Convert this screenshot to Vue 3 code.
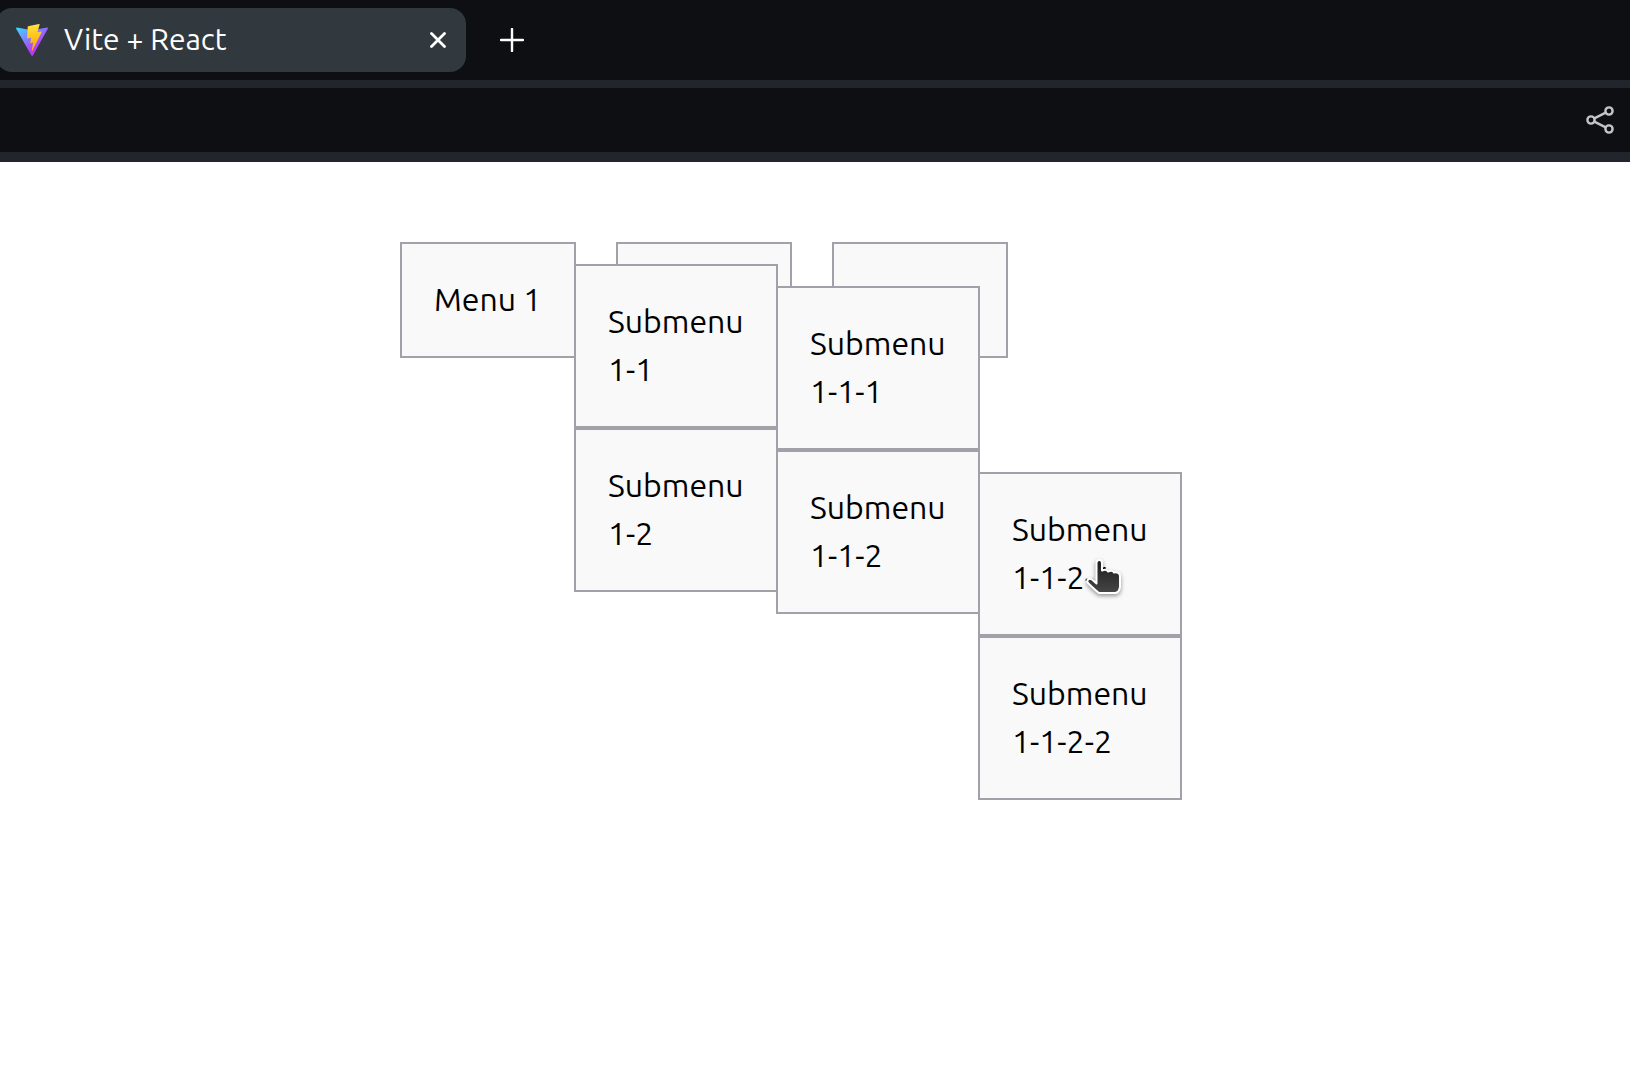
<script setup>
import { defineComponent, h } from 'vue'

const menus = [
  {
    label: 'Menu 1',
    open: true,
    children: [
      {
        label: 'Submenu 1-1',
        open: true,
        children: [
          { label: 'Submenu 1-1-1' },
          {
            label: 'Submenu 1-1-2',
            open: true,
            children: [
              { label: 'Submenu 1-1-2-1', hovered: true },
              { label: 'Submenu 1-1-2-2' },
            ],
          },
        ],
      },
      { label: 'Submenu 1-2' },
    ],
  },
  { label: 'Menu 2', covered: true },
  { label: 'Menu 3', covered: true },
]

// Hand pointer shown over the hovered entry
const pointer = () =>
  h('svg', { class: 'pointer', viewBox: '0 0 40 42', 'aria-hidden': 'true' }, [
    h('path', {
      d: 'M10.5 5C10.5 1 16 1 16 5V12.5C18 11.5 21 11.5 22 13.5C24 12.5 27 12.5 28 14.5C31 14 34 15 34 18V29C33.500 32 32 35 29 35H13C10 33 5 28 2 25C0 22 3 19.500 6 21.500L10.500 25.500Z',
      fill: 'url(#hand)',
      stroke: '#fff',
      'stroke-width': 2,
      'stroke-linejoin': 'round',
    }),
  ])

const MenuList = defineComponent({
  name: 'MenuList',
  props: { items: Array, root: Boolean },
  setup(props) {
    return () =>
      h(
        'ul',
        { class: props.root ? 'menu' : 'submenu' },
        props.items.map((item) =>
          h('li', { class: 'item', key: item.label }, [
            // Entries lying under an open submenu keep only their accessible name
            h(
              'button',
              { type: 'button', class: 'entry', 'aria-label': item.covered ? item.label : null },
              item.covered ? '' : item.label,
            ),
            item.open ? h(MenuList, { items: item.children }) : null,
            item.hovered ? pointer() : null,
          ]),
        ),
      )
  },
})
</script>

<template>
  <div class="window">
    <header>
      <div class="tabs">
        <div class="tab">
          <svg class="logo" viewBox="0 0 256 257" aria-hidden="true">
            <defs>
              <linearGradient id="shield" x1="-.828%" x2="57.636%" y1="7.652%" y2="78.411%">
                <stop offset="0%" stop-color="#41d1ff" />
                <stop offset="100%" stop-color="#bd34fe" />
              </linearGradient>
              <linearGradient id="bolt" x1="43.376%" x2="50.316%" y1="2.242%" y2="89.03%">
                <stop offset="0%" stop-color="#ffea83" />
                <stop offset="8.333%" stop-color="#ffdd35" />
                <stop offset="100%" stop-color="#ffa800" />
              </linearGradient>
              <linearGradient id="hand" x1="0" x2="0" y1="0" y2="1">
                <stop offset="0%" stop-color="#1c1c1c" />
                <stop offset="100%" stop-color="#464646" />
              </linearGradient>
            </defs>
            <path fill="url(#shield)" d="M255.153 37.938L134.897 252.976c-2.483 4.44-8.862 4.466-11.382.048L.875 37.958c-2.746-4.814 1.371-10.646 6.827-9.67l120.385 21.517a6.537 6.537 0 0 0 2.322-.004l117.867-21.483c5.438-.991 9.574 4.796 6.877 9.62Z" />
            <path fill="url(#bolt)" d="M185.432.063L96.44 17.501a3.268 3.268 0 0 0-2.634 3.014l-5.474 92.456a3.268 3.268 0 0 0 3.997 3.378l24.777-5.718c2.318-.535 4.413 1.507 3.936 3.838l-7.361 36.047c-.495 2.426 1.782 4.5 4.151 3.78l15.304-4.649c2.372-.72 4.652 1.36 4.15 3.788l-11.698 56.621c-.732 3.542 3.979 5.473 5.943 2.437l1.313-2.028l72.516-144.72c1.215-2.423-.88-5.186-3.54-4.672l-25.505 4.922c-2.396.462-4.435-1.77-3.759-4.114l16.646-57.705c.677-2.35-1.37-4.583-3.769-4.113Z" />
          </svg>
          <span class="title">Vite + React</span>
          <button class="icon" type="button" aria-label="Close tab">
            <svg width="16" height="16" viewBox="0 0 16 16"><path d="M1.5 1.5l13 13M14.5 1.5l-13 13" stroke="#fff" stroke-width="2.8" stroke-linecap="round" /></svg>
          </button>
        </div>
        <button class="icon" type="button" aria-label="New tab">
          <svg width="24" height="24" viewBox="0 0 24 24"><path d="M12 1v22M1 12h22" stroke="#fff" stroke-width="2.4" stroke-linecap="round" /></svg>
        </button>
      </div>
      <div class="toolbar">
        <button class="icon" type="button" aria-label="Share">
          <svg width="28" height="28" viewBox="0 0 28 28" fill="none" stroke="#c4c5c7" stroke-width="2.4">
            <circle cx="5" cy="14" r="3.6" /><circle cx="23" cy="5" r="3.6" /><circle cx="23" cy="23" r="3.6" />
            <path d="M8.3 12.3l11.4-5.6M8.3 15.7l11.4 5.6" />
          </svg>
        </button>
      </div>
    </header>
    <nav aria-label="Main">
      <MenuList :items="menus" root />
    </nav>
  </div>
</template>

<style>
body {
  background: #fff;
}
</style>

<style scoped>
.window {
  min-height: 100vh;
  font-family: Ubuntu, "Noto Sans", sans-serif;
}
header {
  background: #0d0f13;
}
.tabs {
  display: flex;
  align-items: center;
  gap: 34px;
  height: 64px;
  padding: 8px 0;
  border-bottom: 8px solid #22252c;
}
.tab {
  box-sizing: border-box;
  display: flex;
  align-items: center;
  width: 470px;
  height: 64px;
  margin-left: -4px;
  padding: 0 20px;
  border-radius: 16px;
  background: #31393e;
  color: #fff;
  font-size: 30px;
  line-height: 40px;
}
.logo {
  width: 32px;
  height: 32px;
}
.title {
  flex: 1;
  margin-left: 16px;
  padding-bottom: 2px;
}
.icon {
  display: flex;
  padding: 0;
  border: 0;
  background: none;
}
.toolbar {
  display: flex;
  align-items: center;
  justify-content: flex-end;
  height: 64px;
  padding-right: 16px;
  border-bottom: 10px solid #22252c;
}
nav {
  padding: 80px 0 0 400px;
}
nav :deep(ul) {
  margin: 0;
  padding: 0;
  list-style: none;
}
nav :deep(.menu) {
  display: flex;
  gap: 40px;
}
nav :deep(.item) {
  position: relative;
  box-sizing: border-box;
  width: 176px;
  border: 2px solid #a1a1aa;
  background: #f9f9f9;
}
nav :deep(.entry) {
  display: block;
  width: 100%;
  min-height: 112px;
  padding: 31px 32px 33px;
  border: 0;
  background: none;
  color: #000;
  font: inherit;
  font-size: 32px;
  line-height: 48px;
  text-align: left;
}
nav :deep(.submenu) {
  position: absolute;
  top: 20px;
  left: 100%;
  z-index: 1;
}
nav :deep(.submenu .item) {
  width: 204px;
}
nav :deep(.pointer) {
  position: absolute;
  top: 84px;
  left: 106px;
  width: 40px;
  height: 42px;
  filter: drop-shadow(0 2px 2px rgb(0 0 0 / 40%));
}
</style>
